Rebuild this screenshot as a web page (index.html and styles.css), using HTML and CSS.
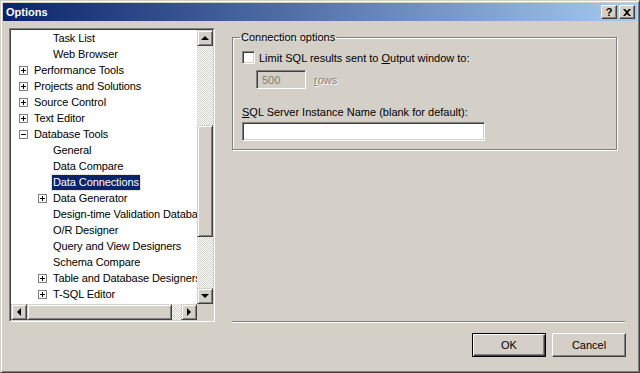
FILE: index.html
```html
<!DOCTYPE html>
<html lang="en">
<head>
    <meta charset="UTF-8">
    <title>Options</title>
    <link rel="stylesheet" href="styles.css">
</head>
<body>
    <div class="window">
        <div class="titlebar">
            <span class="title">Options</span>
            <div class="caption-buttons">
                <span class="cap-btn help">?</span>
                <span class="cap-btn">
                    <svg width="8" height="7" viewBox="0 0 8 7"><path d="M0 0h2l2 2 2-2h2L5 3.5 8 7H6L4 5 2 7H0l3-3.5z" fill="#000"/></svg>
                </span>
            </div>
        </div>

        <div class="content">
            <div class="tree-box">
                <div class="tree-area">
                    <div class="tree">
                        <div class="row lvl2"><span class="noexp"></span><span class="label">Task List</span></div>
                        <div class="row lvl2"><span class="noexp"></span><span class="label">Web Browser</span></div>
                        <div class="row lvl1"><span class="exp plus"></span><span class="label">Performance Tools</span></div>
                        <div class="row lvl1"><span class="exp plus"></span><span class="label">Projects and Solutions</span></div>
                        <div class="row lvl1"><span class="exp plus"></span><span class="label">Source Control</span></div>
                        <div class="row lvl1"><span class="exp plus"></span><span class="label">Text Editor</span></div>
                        <div class="row lvl1"><span class="exp"></span><span class="label">Database Tools</span></div>
                        <div class="row lvl2"><span class="noexp"></span><span class="label">General</span></div>
                        <div class="row lvl2"><span class="noexp"></span><span class="label">Data Compare</span></div>
                        <div class="row lvl2"><span class="noexp"></span><span class="label selected">Data Connections</span></div>
                        <div class="row lvl2"><span class="exp plus"></span><span class="label">Data Generator</span></div>
                        <div class="row lvl2"><span class="noexp"></span><span class="label">Design-time Validation Database Extensions</span></div>
                        <div class="row lvl2"><span class="noexp"></span><span class="label">O/R Designer</span></div>
                        <div class="row lvl2"><span class="noexp"></span><span class="label">Query and View Designers</span></div>
                        <div class="row lvl2"><span class="noexp"></span><span class="label">Schema Compare</span></div>
                        <div class="row lvl2"><span class="exp plus"></span><span class="label">Table and Database Designers</span></div>
                        <div class="row lvl2"><span class="exp plus"></span><span class="label">T-SQL Editor</span></div>
                    </div>
                    <div class="vscroll">
                        <div class="sb-btn"><span class="arrow up"></span></div>
                        <div class="sb-track">
                            <div class="sb-thumb v"></div>
                        </div>
                        <div class="sb-btn"><span class="arrow down"></span></div>
                    </div>
                    <div class="hscroll">
                        <div class="sb-btn"><span class="arrow left"></span></div>
                        <div class="sb-thumb h"></div>
                        <div class="sb-track"></div>
                        <div class="sb-btn"><span class="arrow right"></span></div>
                    </div>
                    <div class="corner"></div>
                </div>
            </div>

            <div class="settings">
                <fieldset class="group">
                    <legend>Connection options</legend>
                    <div class="check-row">
                        <span class="checkbox"></span>
                        <span>Limit SQL results sent to <u>O</u>utput window to:</span>
                    </div>
                    <div class="rows-row">
                        <span class="field disabled">500</span>
                        <span class="disabled-text"><u>r</u>ows</span>
                    </div>
                    <div class="field-label"><u>S</u>QL Server Instance Name (blank for default):</div>
                    <div class="field wide"></div>
                </fieldset>

                <div class="separator"></div>
                <div class="buttons">
                    <div class="btn default">OK</div>
                    <div class="btn">Cancel</div>
                </div>
            </div>
        </div>
    </div>
</body>
</html>
```

FILE: styles.css
```css
body {
    margin: 0;
    font-family: 'Liberation Sans', Arial, sans-serif;
    font-size: 11px;
    color: #000;
    background: #d4d0c8;
}
.window {
    width: 640px;
    height: 373px;
    box-sizing: border-box;
    border: 1px solid;
    border-color: #d4d0c8 #404040 #404040 #d4d0c8;
    box-shadow: inset 1px 1px 0 #fff, inset -1px -1px 0 #808080;
    padding: 2px;
    background: #d4d0c8;
    display: flex;
    flex-direction: column;
}
.titlebar {
    height: 18px;
    flex: none;
    background: linear-gradient(to right, #0a246a, #a6caf0);
    display: flex;
    align-items: center;
    justify-content: space-between;
    padding: 0 2px 0 3px;
}
.title {
    color: #fff;
    font-weight: bold;
    font-size: 11px;
}
.caption-buttons {
    display: flex;
    gap: 2px;
}
.cap-btn {
    width: 16px;
    height: 14px;
    box-sizing: border-box;
    background: #d4d0c8;
    border: 1px solid;
    border-color: #fff #404040 #404040 #fff;
    box-shadow: inset -1px -1px 0 #808080;
    display: flex;
    align-items: center;
    justify-content: center;
    font-weight: bold;
    font-size: 11px;
    line-height: 1;
}
.content {
    flex: 1;
    display: flex;
    min-height: 0;
}

/* tree */
.tree-box {
    margin: 7px 0 0 6px;
    width: 206px;
    height: 294px;
    box-sizing: border-box;
    border: 1px solid;
    border-color: #808080 #fff #fff #808080;
    flex: none;
}
.tree-area {
    height: 100%;
    border: 1px solid;
    border-color: #404040 #d4d0c8 #d4d0c8 #404040;
    box-sizing: border-box;
    display: grid;
    grid-template-columns: 186px 16px;
    grid-template-rows: 274px 16px;
}
.tree {
    background: #fff;
    overflow: hidden;
    white-space: nowrap;
    letter-spacing: -0.1px;
}
.row {
    height: 16px;
    display: flex;
    align-items: center;
}
.lvl1 { padding-left: 8px; }
.lvl2 { padding-left: 27px; }
.exp, .noexp {
    width: 9px;
    height: 9px;
    margin-right: 5px;
    flex: none;
    box-sizing: border-box;
}
.exp {
    border: 1px solid #808080;
    position: relative;
    background: #fff;
}
.exp::before {
    content: "";
    position: absolute;
    left: 1px;
    top: 3px;
    width: 5px;
    height: 1px;
    background: #000;
}
.exp.plus::after {
    content: "";
    position: absolute;
    left: 3px;
    top: 1px;
    width: 1px;
    height: 5px;
    background: #000;
}
.label {
    padding: 1px 1px;
    line-height: 13px;
}
.selected {
    background: #0a246a;
    color: #fff;
    outline: 1px dotted #d4d0c8;
}

/* scrollbars */
.vscroll {
    display: flex;
    flex-direction: column;
}
.hscroll {
    display: flex;
}
.sb-btn {
    width: 16px;
    height: 16px;
    flex: none;
    box-sizing: border-box;
    background: #d4d0c8;
    border: 1px solid;
    border-color: #d4d0c8 #404040 #404040 #d4d0c8;
    box-shadow: inset 1px 1px 0 #fff, inset -1px -1px 0 #808080;
    display: flex;
    align-items: center;
    justify-content: center;
}
.sb-track {
    flex: 1;
    background: repeating-conic-gradient(#d4d0c8 0 25%, #fff 0 50%) 0 0 / 2px 2px;
}
.sb-thumb {
    box-sizing: border-box;
    background: #d4d0c8;
    border: 1px solid;
    border-color: #d4d0c8 #404040 #404040 #d4d0c8;
    box-shadow: inset 1px 1px 0 #fff, inset -1px -1px 0 #808080;
}
.sb-thumb.v {
    height: 112px;
    margin-top: 79px;
}
.sb-thumb.h {
    width: 145px;
}
.arrow {
    width: 0;
    height: 0;
    border: 4px solid transparent;
}
.arrow.up { border-bottom-color: #000; border-top-width: 0; margin-top: -1px; }
.arrow.down { border-top-color: #000; border-bottom-width: 0; }
.arrow.left { border-right-color: #000; border-left-width: 0; margin-left: -1px; }
.arrow.right { border-left-color: #000; border-right-width: 0; }
.corner {
    background: #d4d0c8;
}

/* settings */
.settings {
    flex: 1;
    margin: 0 11px 0 17px;
    padding-top: 10px;
    display: flex;
    flex-direction: column;
}
.group {
    margin: 0 9px 0 0;
    padding: 7px 8px 8px 9px;
    border: 1px solid #808080;
    box-shadow: inset 1px 1px 0 #fff, 1px 1px 0 #fff;
}
.group legend {
    padding: 0 1px;
    margin-left: -2px;
    line-height: 13px;
}
.check-row {
    display: flex;
    align-items: center;
    gap: 4px;
    height: 13px;
}
.checkbox {
    width: 13px;
    height: 13px;
    box-sizing: border-box;
    background: #fff;
    border: 1px solid;
    border-color: #808080 #fff #fff #808080;
    box-shadow: inset 1px 1px 0 #404040, inset -1px -1px 0 #d4d0c8;
}
.rows-row {
    display: flex;
    align-items: center;
    gap: 8px;
    margin: 6px 0 0 14px;
}
.field {
    box-sizing: border-box;
    border: 1px solid;
    border-color: #808080 #fff #fff #808080;
    box-shadow: inset 1px 1px 0 #404040, inset -1px -1px 0 #d4d0c8;
    background: #fff;
}
.field.disabled {
    width: 50px;
    height: 19px;
    background: #d4d0c8;
    color: #808080;
    padding: 3px 0 0 5px;
}
.disabled-text {
    color: #808080;
    text-shadow: 1px 1px 0 #fff;
}
.field-label {
    margin-top: 17px;
    line-height: 13px;
}
.field.wide {
    width: 243px;
    height: 19px;
    margin-top: 3px;
}
.separator {
    margin-top: auto;
    margin-right: 1px;
    height: 1px;
    border-top: 1px solid #808080;
    background: #fff;
}
.buttons {
    display: flex;
    justify-content: flex-end;
    gap: 6px;
    margin: 10px 0 13px;
}
.btn {
    width: 74px;
    height: 24px;
    box-sizing: border-box;
    border: 1px solid;
    border-color: #fff #404040 #404040 #fff;
    box-shadow: inset -1px -1px 0 #808080;
    display: flex;
    align-items: center;
    justify-content: center;
}
.btn.default {
    border: 1px solid #000;
    box-shadow: inset 1px 1px 0 #fff, inset -1px -1px 0 #404040, inset -2px -2px 0 #808080;
}
```
